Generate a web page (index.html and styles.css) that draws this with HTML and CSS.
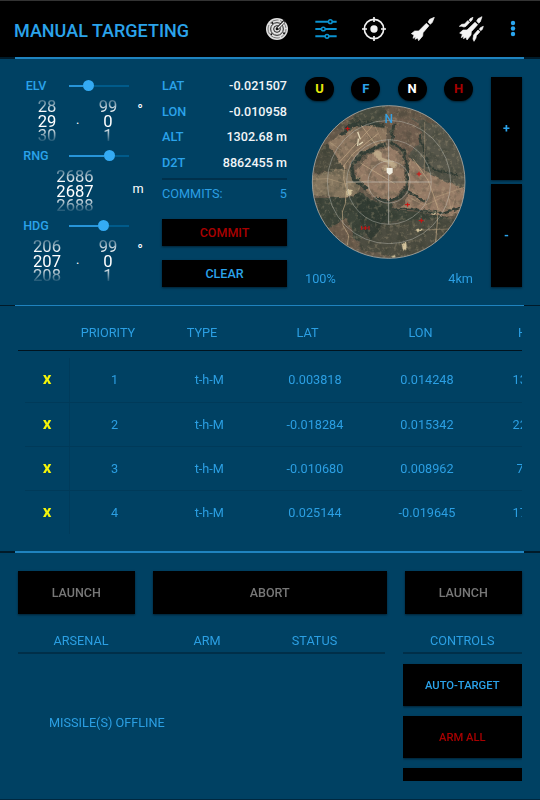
FILE: index.html
```html
<!DOCTYPE html>
<html lang="en">
<head>
<meta charset="utf-8">
<title>Manual Targeting</title>
<link rel="stylesheet" href="styles.css">
</head>
<body>
<header class="bar">
  <h1>MANUAL TARGETING</h1>
  <nav class="tools">
    <svg width="24" height="24" viewBox="0 0 72 72" fill="none" stroke="#eee"><circle cx="36" cy="36" r="33" fill="#e0e0e0" stroke="none"/><g stroke="#222" stroke-width="3"><circle cx="36" cy="36" r="27" stroke-dasharray="29 5" stroke="#777"/><circle cx="36" cy="36" r="19"/><circle cx="36" cy="36" r="10"/></g><path d="M36 36 61 10" stroke="#111" stroke-width="9"/><path d="M37 35 58 14" stroke-width="4"/><circle cx="36" cy="36" r="4" fill="#111" stroke="none"/><g fill="#111" stroke="none"><circle cx="19" cy="52" r="3"/><circle cx="57" cy="49" r="3"/><circle cx="22" cy="18" r="3"/></g></svg>
    <svg width="24" height="24" viewBox="0 0 72 72" fill="none" stroke="#0b93d1" stroke-width="6"><path d="M4 14h40m10 0h14M4 36h19m10 0h35M4 58h30m10 0h24"/><g stroke-width="4.500"><circle cx="49" cy="14" r="5.500"/><circle cx="28" cy="36" r="5.500"/><circle cx="39" cy="58" r="5.500"/></g></svg>
    <svg width="24" height="24" viewBox="0 0 72 72" fill="none" stroke="#f2f2f2" stroke-width="5"><circle cx="36" cy="36" r="29"/><path d="M36 0v15M36 57v15M0 36h15M57 36h15"/><circle cx="36" cy="36" r="11" fill="#f2f2f2" stroke="none"/></svg>
    <svg width="24" height="24" viewBox="34 20 72 72" fill="#f4f4f4" stroke="#f4f4f4" stroke-width="2" stroke-linejoin="round"><path d="M104 21 90 27 85 35 92 42 98 36ZM80 39 88 46 70 67 69 77 57 91 54 83 46 87 48 79 40 84 43 74 35 70 45 62 57 62Z"/></svg>
    <svg width="26" height="26" viewBox="179 18 78 78" fill="#f4f4f4" stroke="#f4f4f4" stroke-width="2" stroke-linejoin="round"><path d="M248 20 236 26 232 33 238 40 243 35ZM227 37 235 44 216 65 215 75 203 90 200 82 192 86 194 78 186 83 189 73 181 69 191 60 203 60Z"/><path d="M221 22 212 26 209 31 213 35 218 31ZM205 32 211 37 200 49 194 51 187 49 180 49 187 43 196 42ZM252 49 243 53 240 58 245 62 249 58ZM236 60 242 65 231 77 230 84 224 94 221 87 223 75Z"/></svg>
    <svg class="more" width="6" height="18" viewBox="0 0 6 18" fill="#2ba6ef"><circle cx="3" cy="3" r="2.200"/><circle cx="3" cy="8.500" r="2.200"/><circle cx="3" cy="14" r="2.200"/></svg>
  </nav>
</header>

<section class="aim">
  <div class="dials">
    <div class="dial">
      <div class="dial-head"><b>ELV</b><div class="slider"><i class="fill elv"></i><i class="thumb"></i></div></div>
      <div class="dial-body"><div class="wheel whole"><span>28</span><span class="now">29</span><span>30</span></div><span class="dot">.</span><div class="wheel frac"><span>99</span><span class="now">0</span><span>1</span></div><span class="unit deg">°</span></div>
    </div>
    <div class="dial">
      <div class="dial-head"><b>RNG</b><div class="slider"><i class="fill rng"></i><i class="thumb"></i></div></div>
      <div class="dial-body"><div class="wheel range"><span>2686</span><span class="now">2687</span><span>2688</span></div><span class="unit">m</span></div>
    </div>
    <div class="dial">
      <div class="dial-head"><b>HDG</b><div class="slider"><i class="fill hdg"></i><i class="thumb"></i></div></div>
      <div class="dial-body"><div class="wheel whole"><span>206</span><span class="now">207</span><span>208</span></div><span class="dot">.</span><div class="wheel frac"><span>99</span><span class="now">0</span><span>1</span></div><span class="unit deg">°</span></div>
    </div>
  </div>

  <div class="fix">
    <dl>
      <dt>LAT</dt><dd>-0.021507</dd>
      <dt>LON</dt><dd>-0.010958</dd>
      <dt>ALT</dt><dd>1302.68 m</dd>
      <dt>D2T</dt><dd>8862455 m</dd>
    </dl>
    <div class="commits"><span>COMMITS:</span><span>5</span></div>
    <button class="red">COMMIT</button>
    <button>CLEAR</button>
  </div>

  <div class="map">
    <div class="chips"><button class="u">U</button><button>F</button><button class="n">N</button><button class="red">H</button></div>
    <svg class="scope" width="162" height="160" viewBox="0 0 486 480">
      <defs>
        <clipPath id="disc"><circle cx="242" cy="240" r="229"/></clipPath>
        <filter id="rough" x="0" y="0" width="486" height="480" filterUnits="userSpaceOnUse" color-interpolation-filters="sRGB"><feTurbulence type="fractalNoise" baseFrequency=".04" numOctaves="3" seed="8" result="n"/><feDisplacementMap in="SourceGraphic" in2="n" scale="18" xChannelSelector="R" yChannelSelector="G"/><feGaussianBlur stdDeviation="1.200"/></filter>
        <filter id="dark" x="0" y="0" width="486" height="480" filterUnits="userSpaceOnUse" color-interpolation-filters="sRGB"><feTurbulence type="fractalNoise" baseFrequency=".045" numOctaves="4" seed="3"/><feColorMatrix values="0 0 0 0 .16  0 0 0 0 .2  0 0 0 0 .16  4 0 0 0 -1.9"/></filter>
        <filter id="light" x="0" y="0" width="486" height="480" filterUnits="userSpaceOnUse" color-interpolation-filters="sRGB"><feTurbulence type="fractalNoise" baseFrequency=".09" numOctaves="3" seed="12"/><feColorMatrix values="0 0 0 0 .78  0 0 0 0 .7  0 0 0 0 .56  4 0 0 0 -2.1"/></filter>
      </defs>
      <g clip-path="url(#disc)">
        <rect width="486" height="480" fill="#64594b"/>
        <g filter="url(#rough)">
          <path d="M-10-10H500V130L350 90 280 70 190 80 100 70 60 150 0 190Z" fill="#66594a"/>
          <path d="M150 10 230 10 240 50 205 70 155 55 115 80Z" fill="#484c40"/>
          <path d="M310 50 480 80V265L400 240 350 215 305 165Z" fill="#56564a"/>
          <path d="M10 140 60 125 110 155 112 205 20 210Z" fill="#4b4b3e"/>
          <path d="M60 125 120 75 200 65 240 75 230 120 150 155 130 200 110 200Z" fill="#8c7660"/>
          <path d="M245 45 330 60 345 110 300 155 260 120Z" fill="#705e4f"/>
          <path d="M145 205 185 155 240 135 285 165 290 250 255 298 205 290 150 245Z" fill="#957b66"/>
          <path d="M305 165 360 215 480 265 480 320 400 350 345 325 275 320 300 285 295 220Z" fill="#957b66"/>
          <path d="M10 218 120 200 160 235 145 280 90 285 10 275Z" fill="#85765f"/>
          <path d="M20 285 130 285 155 270 205 300 260 305 250 325 345 330 440 355 430 410 330 390 285 420 240 380 160 420 100 365 40 380Z" fill="#3d453a"/>
          <path d="M180 370 330 350 460 350 420 430 280 470 150 440Z" fill="#4d4d41"/>
          <path d="M60 380 115 350 155 430 130 450Z" fill="#6b5b4b"/>
          <g fill="none" stroke="#343e36" stroke-width="12" stroke-linejoin="round"><path d="M100 100 120 78 160 62 230 72M230 126 190 142 155 163 132 190 138 230 175 262"/><path d="M258 65 250 125 289 145 293 175 300 205 293 265 270 288 240 298 200 290" stroke-width="9"/><path d="M298 270 355 300M252 322 305 320 395 333 470 315M335 95 360 195 450 220" stroke-width="7"/></g>
          <path d="M145 275 200 300 240 330 190 420 150 350Z" fill="#2f3a32" opacity=".8"/>
        </g>
        <rect width="486" height="480" filter="url(#dark)" opacity=".25"/>
        <rect width="486" height="480" filter="url(#light)" opacity=".25"/>
        <g fill="none" stroke="#c9ae8a" stroke-width="2.500" stroke-linejoin="round" opacity=".75"><path d="M90 185 195 70M105 195 135 155 210 95M160 185 260 245M160 70 205 130M110 190 107 230 115 260 112 305 103 330 105 370 122 400 118 430M315 170 345 213 360 235 375 275 390 320 388 360 382 430"/><path d="M10 232 60 230 110 245 190 235M310 290 350 310 395 290M350 60V215M385 285 470 255M320 385 400 382 480 378M65 120 100 145M200 70 235 145M420 280 430 325 440 290" opacity=".6"/></g>
        <path d="M149 90 157 112M151 110l-2 22M153 128l12-8" fill="none" stroke="#e3d7b7" stroke-width="4"/>
        <g filter="url(#rough)" fill="#d3c39c"><path d="M190 150 212 148 230 165 268 185 262 200 225 182 205 170ZM220 195 240 190 235 210Z" opacity=".6"/><path d="M115 260h16v20h-16zM280 425l14-4 4 18-12 8zM245 462l20-8-5 10zM328 380h12v7h-12zM370 330h10v5h-10z"/></g>
      </g>
      <g fill="none" stroke="#cccbc4" stroke-width="2" opacity=".6"><circle cx="243" cy="240" r="63"/><circle cx="243" cy="240" r="127"/><circle cx="243" cy="240" r="185"/><path d="M242 112V367M116 240H370" stroke-width="3"/></g>
      <circle cx="242" cy="240" r="229" fill="none" stroke="#a9aaa4" stroke-width="2.500"/>
      <path d="M236 198h18v14l-9 7-9-7z" fill="#f2f0e4"/>
      <path d="M112 80h13m-6-6v12M326 216h14m-7-7v14M291 308h15m-7-6v12M332 356h15m-7-6v12M165 378h14m-7-6v12M161 372v12M183 372v12" stroke="#d20e0e" stroke-width="3"/>
      <text class="north" x="242" y="63">N</text>
    </svg>
    <div class="scale"><span>100%</span><span>4km</span></div>
  </div>

  <div class="zoom"><button>+</button><button>-</button></div>
</section>

<section class="targets">
  <div class="row head"><span></span><span>PRIORITY</span><span>TYPE</span><span>LAT</span><span>LON</span><span class="cut">HAE</span></div>
  <div class="rows">
    <div class="row"><b>X</b><span>1</span><span>t-h-M</span><span>0.003818</span><span>0.014248</span><span class="cut">1302</span></div>
    <div class="row"><b>X</b><span>2</span><span>t-h-M</span><span>-0.018284</span><span>0.015342</span><span class="cut">2202</span></div>
    <div class="row"><b>X</b><span>3</span><span>t-h-M</span><span>-0.010680</span><span>0.008962</span><span class="cut short">710</span></div>
    <div class="row"><b>X</b><span>4</span><span>t-h-M</span><span>0.025144</span><span>-0.019645</span><span class="cut">1702</span></div>
  </div>
</section>

<section class="fire">
  <div class="launch"><button disabled>LAUNCH</button><button disabled>ABORT</button><button disabled>LAUNCH</button></div>
  <div class="panes">
    <div class="arsenal">
      <div class="cols"><span>ARSENAL</span><span>ARM</span><span>STATUS</span></div>
      <p>MISSILE(S) OFFLINE</p>
    </div>
    <div class="controls">
      <div class="cols"><span>CONTROLS</span></div>
      <div class="stack"><button>AUTO-TARGET</button><button class="red">ARM ALL</button><button></button></div>
    </div>
  </div>
</section>
</body>
</html>
```
FILE: styles.css
```css
* { box-sizing: border-box; }
body {
  margin: 0;
  width: 540px;
  height: 800px;
  overflow: hidden;
  display: grid;
  grid-template-columns: 540px;
  grid-template-rows: 59px 247px 247px 247px;
  background: #004163;
  color: #2b9fe3;
  font: 12.7px/16px Roboto, sans-serif;
}
button {
  border: 0;
  padding: 0;
  background: #000;
  color: #2ba3ea;
  font: 500 12.5px/16px Roboto, sans-serif;
  box-shadow: 0 1px 2px rgba(0, 0, 0, .5);
}
.red { color: #a80000; }
svg { display: block; }

/* Section rules: dark at both edges, bright between the margins */
.bar, .aim, .targets {
  background-image: linear-gradient(90deg, #001a29 15px, #1f83bf 15px, #1f83bf 524px, #001a29 524px);
  background-size: 100% 2px;
  background-position: bottom;
  background-repeat: no-repeat;
}
.aim { background-size: 100% 1.500px; }

.bar {
  background-color: #000;
  border-top: 1px solid #333;
  display: flex;
  align-items: center;
  justify-content: space-between;
  padding: 0 24.500px 0 14px;
}
h1 { margin: 1px 0 0; font-size: 18px; font-weight: 500; line-height: 22px; color: #2ba3ea; }
.tools { display: flex; align-items: center; gap: 24.5px; margin-top: -2px; }

.aim {
  display: grid;
  grid-template-columns: 129px 125px 168px 31px;
  column-gap: 18px;
  padding: 18px 18px 18px 15px;
}
.dials { margin-top: -1px; }
.dial { height: 70px; }
.dial-head { height: 19px; display: grid; grid-template-columns: 42px 60px; column-gap: 12px; align-items: center; text-align: center; }
.dial-head b, dt { font-weight: 500; color: #2ba3ea; }
.dial-head b { font-size: 12.5px; }
.slider { height: 2px; background: #005b8b; display: flex; align-items: center; }
.fill { height: 2px; background: #2795d9; flex: none; }
.elv { width: 14px; }
.rng { width: 35px; }
.hdg { width: 29px; }
.thumb { width: 11px; height: 11px; border-radius: 50%; background: #34abf4; flex: none; }
.dial-body { height: 46px; display: flex; align-items: center; color: #fff; }
.wheel {
  height: 46px;
  overflow: hidden;
  display: flex;
  flex: none;
  flex-direction: column;
  align-items: center;
  font-size: 16.6px;
  line-height: 14.500px;
  padding-top: 5px;
  -webkit-mask-image: linear-gradient(transparent 0, #000 17px, #000 32px, transparent 48px);
  mask-image: linear-gradient(transparent 0, #000 17px, #000 32px, transparent 48px);
}
.wheel span { flex: none; }
.whole { width: 34px; margin-left: 15px; }
.frac { width: 30px; margin-left: 13px; }
.range { width: 40px; margin-left: 40px; }
.dot { width: 4px; margin-left: 12px; padding-top: 3px; flex: none; }
.unit { width: 14px; text-align: center; flex: none; padding-top: 2px; }
.frac + .unit { margin-left: 10px; }
.range + .unit { margin-left: 36px; }
.deg { font-size: 15px; font-weight: 500; align-self: flex-start; margin-top: 5px; }

dl { margin: -3.500px 0 0; display: grid; grid-template-columns: auto 1fr; grid-auto-rows: 25.600px; align-items: center; }
dd { margin: 0; text-align: right; color: #f1f5f7; font-weight: 500; font-size: 12.6px; }
.commits { display: flex; justify-content: space-between; border-top: 2px solid #00304b; padding-top: 6px; height: 40.500px; margin-top: 2.500px; margin-bottom: .5px; }
.fix { display: flex; flex-direction: column; }
.fix button { height: 27px; flex: none; margin-bottom: 13.500px; padding-top: 1px; }

.chips { display: flex; justify-content: space-between; }
.chips button { width: 29px; height: 24px; border-radius: 12px; font-weight: 700; font-size: 13px; }
.chips .u { color: #e8e80c; }
.chips .n { color: #fff; }
.chips .red { color: #a80000; }
.scope { margin: 1px 0 0 3px; }
.north { font: 500 36px Roboto, sans-serif; fill: #35a1e2; text-anchor: middle; }
.scale { display: flex; justify-content: space-between; margin-top: 9px; }
.zoom { display: grid; grid-template-rows: 103px 103px; gap: 4px; }
.zoom button { font-weight: 700; }

.targets { padding: 9px 18.500px 0 18px; }
.row { display: grid; grid-template-columns: 44.500px 90px 99.500px 112px 112px 60px; height: 44px; align-items: center; text-align: center; overflow: hidden; }
.head { grid-template-columns: 45px 90px 98px 113px 113px 60px; height: 36px; border-bottom: 1.500px solid #00131f; }
.rows { margin: 7px 0 0 7px; background: linear-gradient(#003b5b, #003b5b) 44px 0 / 1px 100% no-repeat; }
.rows .row + .row { border-top: 1px solid #003a59; }
.row b { color: #f5f50a; font-weight: 900; font-size: 13px; }
.row .cut { text-align: left; padding-left: 29.500px; }
.row .short { padding-left: 33.500px; }
.head .cut { padding-left: 41px; }

.fire { padding: 18px 18.500px 0 18px; border-bottom: 1px solid #00283f; }
.launch { display: grid; grid-template-columns: 116.500px 233.500px 116.500px; justify-content: space-between; height: 43px; }
.launch button { color: #777; }
.panes { display: grid; grid-template-columns: 367px 118.500px; justify-content: space-between; }
.cols { height: 40px; display: grid; padding-top: 15px; align-items: center; text-align: center; border-bottom: 2px solid #002f49; }
.arsenal .cols { grid-template-columns: 126px 126px 89px; }
.arsenal p { margin: 61px 0 0 31px; }
.stack { display: grid; grid-template-rows: 42px 42px 42px; gap: 10px; height: 127px; padding-top: 10px; overflow: hidden; }
.stack button { font-size: 11.2px; padding-top: 1px; }
```
